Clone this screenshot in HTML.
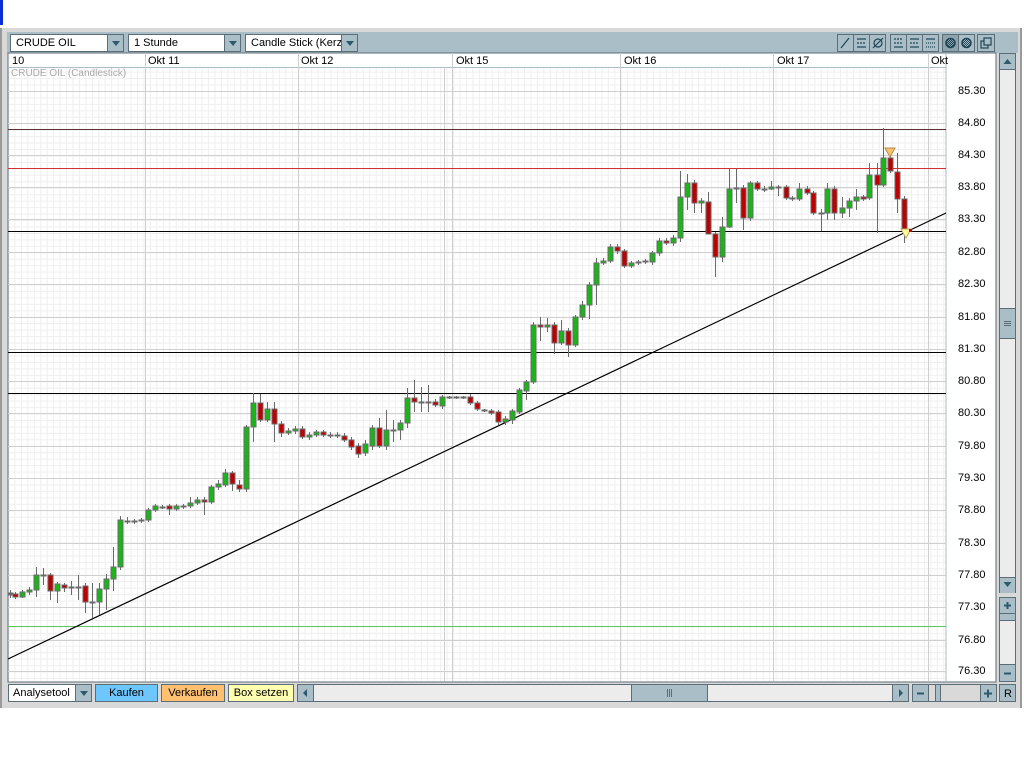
<!DOCTYPE html>
<html><head><meta charset="utf-8"><style>
*{margin:0;padding:0;box-sizing:border-box}
body{width:1024px;height:768px;background:#fff;position:relative;overflow:hidden;font-family:"Liberation Sans",sans-serif;font-size:11px;color:#000}
.a{position:absolute}
.sel{position:absolute;background:#fff;border:1px solid #5d6d78;height:18px;top:34px;padding-left:5px;line-height:16px;font-size:11px;overflow:hidden;white-space:nowrap}
.arr{position:absolute;right:0;top:0;width:16px;height:16px;background:#a9bec6;border-left:1px solid #5d6d78}
.arr:after{content:"";position:absolute;left:4px;top:6px;border-left:4px solid transparent;border-right:4px solid transparent;border-top:5px solid #2d5a6a}
.bb{position:absolute;top:684px;height:18px;border:1px solid #5d6d78;line-height:16px;text-align:center;font-size:11px}
.lab{position:absolute;left:958px;font-size:11px}
.dl{position:absolute;top:55px;font-size:11px}
</style></head><body>
<div class="a" style="left:0;top:0;width:3px;height:25px;background:#0a2fd0"></div>
<div class="a" style="left:0;top:28px;width:1022px;height:680px;background:#d9d9d9;border-right:2px solid #9a9a9a"></div>
<div class="a" style="left:0;top:28px;width:2px;height:680px;background:#9a9a9a"></div>
<div class="a" style="left:7px;top:32px;width:1011px;height:21px;background:#a9bec6"></div>
<div class="sel" style="left:10px;width:114px">CRUDE OIL<div class="arr"></div></div>
<div class="sel" style="left:128px;width:113px">1 Stunde<div class="arr"></div></div>
<div class="sel" style="left:245px;width:113px">Candle Stick (Kerze<div class="arr"></div></div>
<svg class="a" style="left:836px;top:33px" width="160" height="20">
<defs><pattern id="ht" width="2" height="2" patternUnits="userSpaceOnUse"><rect width="1" height="1" fill="#1f4555"/><rect x="1" y="1" width="1" height="1" fill="#1f4555"/></pattern></defs>
<g fill="#a9bec6" stroke="#5d6d78"><rect x="1.5" y="1.5" width="48" height="17"/><rect x="54.5" y="1.5" width="48" height="17"/><rect x="106.5" y="1.5" width="32" height="17"/><rect x="141.5" y="1.5" width="17" height="17"/></g>
<g stroke="#5d6d78"><line x1="17.5" y1="2" x2="17.5" y2="18"/><line x1="33.5" y1="2" x2="33.5" y2="18"/><line x1="70.5" y1="2" x2="70.5" y2="18"/><line x1="86.5" y1="2" x2="86.5" y2="18"/><line x1="122.5" y1="2" x2="122.5" y2="18"/></g>
<rect x="107" y="2" width="15" height="16" fill="#8ea4ad"/>
<g stroke="#1f4555" fill="none" stroke-width="1.2">
<line x1="5" y1="15" x2="13" y2="5"/>
<line x1="21" y1="6" x2="30" y2="6"/><line x1="21" y1="10" x2="30" y2="10" stroke-dasharray="2 1"/><line x1="21" y1="14" x2="30" y2="14"/>
<circle cx="42" cy="10" r="4"/><line x1="37" y1="15" x2="47" y2="5"/>
<line x1="58" y1="6" x2="67" y2="6" stroke-dasharray="2 1"/><line x1="58" y1="10" x2="67" y2="10" stroke-dasharray="2 1"/><line x1="58" y1="14" x2="67" y2="14"/>
<line x1="74" y1="6" x2="83" y2="6"/><line x1="74" y1="10" x2="83" y2="10" stroke-dasharray="2 1"/><line x1="74" y1="14" x2="83" y2="14"/>
<line x1="90" y1="6" x2="99" y2="6"/><line x1="90" y1="10" x2="99" y2="10" stroke-dasharray="1 1"/><line x1="90" y1="14" x2="99" y2="14" stroke-dasharray="1 1"/>
<circle cx="114.5" cy="10" r="4.5" stroke-width="1.6" fill="url(#ht)"/><circle cx="130.5" cy="10" r="4.5" stroke-width="1.6" fill="url(#ht)"/>
<rect x="145" y="8" width="7" height="7"/><rect x="148" y="5" width="7" height="7" fill="#a9bec6"/>
</g></svg>
<svg class="a" style="left:0;top:0" width="1024" height="768">
<defs><pattern id="mg" x="8" y="91" width="6.45" height="6.45" patternUnits="userSpaceOnUse"><path d="M0 0.5H6.45M0.5 0V6.45" stroke="#efefef" fill="none"/></pattern></defs>
<rect x="8" y="53" width="988" height="629" fill="#fff" stroke="#5d6d78"/>
<rect x="8.5" y="67" width="937" height="614" fill="url(#mg)"/>
<line x1="8" y1="67.5" x2="946" y2="67.5" stroke="#a9bec6"/>
<line x1="946" y1="53" x2="946" y2="682" stroke="#a9bec6"/>
<g stroke="#cfcfcf">
<path d="M145.5 53V681M298.5 53V681M444.5 67V681M452.5 53V681M620.5 53V681M773.5 53V681M928.5 53V681"/>
<path d="M8 91.5H946M8 123.5H946M8 155.5H946M8 187.5H946M8 219.5H946M8 252.5H946M8 284.5H946M8 317.5H946M8 349.5H946M8 381.5H946M8 413.5H946M8 446.5H946M8 478.5H946M8 510.5H946M8 543.5H946M8 575.5H946M8 607.5H946M8 640.5H946M8 671.5H946"/>
</g>
<line x1="8" y1="129.5" x2="946" y2="129.5" stroke="#5a3030"/>
<line x1="8" y1="168.5" x2="946" y2="168.5" stroke="#d03030"/>
<line x1="8" y1="231.5" x2="946" y2="231.5" stroke="#000"/>
<line x1="8" y1="352.5" x2="946" y2="352.5" stroke="#000"/>
<line x1="8" y1="393.5" x2="946" y2="393.5" stroke="#000"/>
<line x1="8" y1="626.5" x2="946" y2="626.5" stroke="#5cc85c"/>
<line x1="8" y1="659" x2="946" y2="213" stroke="#000" stroke-width="1.2"/>
<g id="c" stroke="#6a6a6a"></g>
<polygon points="885,148 895,148 890,157" fill="#ffc070" stroke="#b98a40"/>
<polygon points="901,229 911,229 906,238" fill="#ffffa0" stroke="#b9b060"/>
<rect x="909" y="229" width="3" height="3" fill="#c00"/>
</svg>
<div class="dl" style="left:12px">10</div><div class="dl" style="left:148px">Okt 11</div><div class="dl" style="left:301px">Okt 12</div><div class="dl" style="left:456px">Okt 15</div><div class="dl" style="left:624px">Okt 16</div><div class="dl" style="left:777px">Okt 17</div><div class="dl" style="left:931px">Okt</div>
<div class="a" style="left:11px;top:68px;color:#aaa;font-size:10px">CRUDE OIL (Candlestick)</div>
<div class="lab" style="top:85px">85.30</div><div class="lab" style="top:117px">84.80</div><div class="lab" style="top:149px">84.30</div><div class="lab" style="top:181px">83.80</div><div class="lab" style="top:213px">83.30</div><div class="lab" style="top:246px">82.80</div><div class="lab" style="top:278px">82.30</div><div class="lab" style="top:311px">81.80</div><div class="lab" style="top:343px">81.30</div><div class="lab" style="top:375px">80.80</div><div class="lab" style="top:407px">80.30</div><div class="lab" style="top:440px">79.80</div><div class="lab" style="top:472px">79.30</div><div class="lab" style="top:504px">78.80</div><div class="lab" style="top:537px">78.30</div><div class="lab" style="top:569px">77.80</div><div class="lab" style="top:601px">77.30</div><div class="lab" style="top:634px">76.80</div><div class="lab" style="top:665px">76.30</div>
<div class="a" style="left:999px;top:53px;width:17px;height:629px;background:#ececec;border:1px solid #5d6d78"></div>
<svg class="a" style="left:999px;top:53px" width="17" height="629">
<g fill="#a9bec6" stroke="#5d6d78"><rect x="0.5" y="0.5" width="16" height="16"/><rect x="0.5" y="255.5" width="16" height="30"/><rect x="0.5" y="524.5" width="16" height="16"/><rect x="0.5" y="544.5" width="16" height="16"/><rect x="0.5" y="560.5" width="16" height="7"/><rect x="0.5" y="611.5" width="16" height="17"/></g>
<rect x="0" y="540" width="17" height="4" fill="#d9d9d9"/>
<path d="M4.5 11L8.5 6L12.5 11Z M4.5 529L8.5 534L12.5 529Z" fill="#2d5a6a"/>
<path d="M5 268.5H12M5 270.5H12M5 272.5H12" stroke="#5d6d78"/>
<path d="M5 552.5H12M8.5 549V556M5 620.5H12" stroke="#2d5a6a" stroke-width="2"/>
</svg>
<div class="bb" style="left:8px;width:84px;background:#fff;text-align:left;padding-left:4px">Analysetool<div class="arr"></div></div>
<div class="bb" style="left:95px;width:63px;background:#6ec6ff">Kaufen</div>
<div class="bb" style="left:161px;width:64px;background:#ffc070">Verkaufen</div>
<div class="bb" style="left:228px;width:66px;background:#ffffb0">Box setzen</div>
<svg class="a" style="left:297px;top:684px" width="720" height="18">
<rect x="0.5" y="0.5" width="611" height="17" fill="#ececec" stroke="#5d6d78"/>
<g fill="#a9bec6" stroke="#5d6d78"><rect x="0.5" y="0.5" width="16" height="17"/><rect x="334.5" y="0.5" width="76" height="17"/><rect x="595.5" y="0.5" width="16" height="17"/><rect x="615.5" y="0.5" width="16" height="17"/><rect x="638.5" y="0.5" width="5" height="17"/><rect x="683.5" y="0.5" width="16" height="17"/><rect x="702.5" y="0.5" width="16" height="17"/></g>
<rect x="631.5" y="0.5" width="68" height="17" fill="none" stroke="#5d6d78"/>
<path d="M10 5V13L6 9Z M602 5V13L606 9Z" fill="#2d5a6a"/>
<path d="M370.5 5V13M372.5 5V13M374.5 5V13" stroke="#5d6d78"/>
<path d="M620 9.5H627M687 9.5H695M691 5.5V13.5" stroke="#2d5a6a" stroke-width="2"/>
<text x="707" y="13" font-family="Liberation Sans" font-size="11">R</text>
</svg>
<script>
var d=[[10,593,595,590,598,'d'],[15,594,597,592,599,'r'],[22,592,597,590,598,'g'],[29,590,592,587,595,'g'],[36,575,590,567,597,'g'],[43,575,576,568,585,'d'],[50,575,591,573,600,'r'],[57,584,591,582,603,'g'],[64,585,588,583,592,'r'],[71,587,588,581,595,'d'],[78,587,588,575,600,'d'],[85,586,602,583,613,'r'],[92,602,603,583,618,'d'],[99,589,602,583,615,'g'],[106,579,589,574,610,'g'],[113,567,579,547,591,'g'],[120,520,567,516,570,'g'],[127,521,522,517,524,'d'],[134,521,522,519,524,'d'],[141,520,521,518,523,'g'],[148,510,520,508,522,'g'],[155,506,510,504,512,'g'],[162,507,508,505,509,'d'],[169,506,509,504,515,'r'],[176,506,509,504,511,'g'],[183,506,507,504,509,'d'],[190,503,506,497,508,'g'],[197,500,503,497,505,'g'],[204,500,502,497,515,'r'],[211,487,502,485,504,'g'],[218,484,487,480,490,'g'],[225,473,485,469,487,'g'],[232,473,484,471,491,'r'],[239,485,489,480,492,'r'],[246,427,489,425,492,'g'],[253,403,427,393,442,'g'],[260,403,420,394,422,'r'],[267,409,420,402,422,'g'],[274,409,424,402,442,'r'],[281,424,433,421,437,'r'],[288,431,433,428,435,'g'],[295,429,431,426,434,'g'],[302,429,437,426,439,'r'],[309,435,437,432,440,'g'],[316,432,435,430,437,'g'],[323,432,435,430,437,'r'],[330,435,436,432,438,'d'],[337,435,436,432,438,'d'],[344,436,440,433,442,'r'],[351,440,447,437,450,'r'],[358,446,454,443,458,'r'],[365,444,453,440,456,'g'],[372,428,446,425,450,'g'],[379,428,446,418,448,'r'],[386,430,446,410,450,'g'],[393,430,431,420,442,'d'],[400,423,430,420,440,'g'],[407,398,423,388,428,'g'],[414,398,402,380,412,'r'],[421,402,403,387,412,'d'],[428,402,403,385,412,'d'],[435,402,405,399,407,'r'],[442,397,406,395,409,'g'],[449,397,398,396,399,'d'],[456,397,398,396,399,'d'],[463,397,398,396,399,'d'],[470,397,403,394,405,'r'],[477,403,409,401,411,'r'],[484,410,411,409,412,'d'],[491,411,413,409,415,'r'],[498,412,422,410,425,'r'],[505,419,422,416,425,'g'],[512,411,420,409,424,'g'],[519,390,412,388,414,'g'],[526,382,391,380,400,'g'],[533,325,382,322,384,'g'],[540,325,327,317,341,'r'],[547,325,327,318,332,'g'],[554,325,343,322,354,'r'],[561,331,343,320,345,'g'],[568,331,345,328,357,'r'],[575,317,345,315,347,'g'],[582,305,317,301,320,'g'],[589,285,305,282,319,'g'],[596,263,285,258,305,'g'],[603,261,263,258,265,'g'],[610,247,261,244,263,'g'],[617,247,251,244,254,'r'],[624,251,266,249,268,'r'],[631,263,266,261,268,'g'],[638,262,263,260,265,'d'],[645,261,262,259,264,'d'],[652,253,262,251,265,'g'],[659,241,253,238,256,'g'],[666,241,243,238,245,'r'],[673,238,243,235,246,'g'],[680,197,238,171,242,'g'],[687,183,197,174,210,'g'],[694,183,203,180,213,'r'],[701,201,203,198,213,'g'],[708,202,234,192,234,'r'],[715,234,257,232,277,'r'],[722,227,257,217,262,'g'],[729,189,227,169,228,'g'],[736,188,189,169,203,'g'],[743,188,218,185,230,'r'],[750,183,218,181,221,'g'],[757,183,189,181,191,'r'],[764,189,190,186,192,'d'],[771,187,189,181,190,'g'],[778,187,188,185,196,'d'],[786,187,198,185,200,'r'],[792,198,199,196,201,'r'],[799,189,199,183,201,'g'],[807,189,193,186,195,'r'],[813,193,213,191,215,'r'],[821,213,214,209,231,'d'],[827,189,213,183,220,'g'],[834,189,213,186,220,'r'],[842,208,213,197,218,'g'],[849,201,208,198,217,'g'],[856,197,201,189,210,'g'],[863,197,199,195,201,'r'],[869,175,198,163,200,'g'],[877,175,185,163,233,'r'],[883,158,185,128,187,'g'],[890,158,171,148,173,'r'],[897,172,199,153,213,'r'],[904,199,230,196,243,'r']];
var s='';d.forEach(function(c){var col=c[5]=='g'?'#19b519':c[5]=='r'?'#c00000':'#6a6a6a';s+='<line x1="'+(c[0]+.5)+'" y1="'+c[3]+'" x2="'+(c[0]+.5)+'" y2="'+c[4]+'"/>';var h=Math.max(c[2]-c[1],1);s+='<rect x="'+(c[0]-2)+'" y="'+c[1]+'" width="5" height="'+h+'" fill="'+col+'"/>';});
document.getElementById('c').innerHTML=s;
</script>
</body></html>
